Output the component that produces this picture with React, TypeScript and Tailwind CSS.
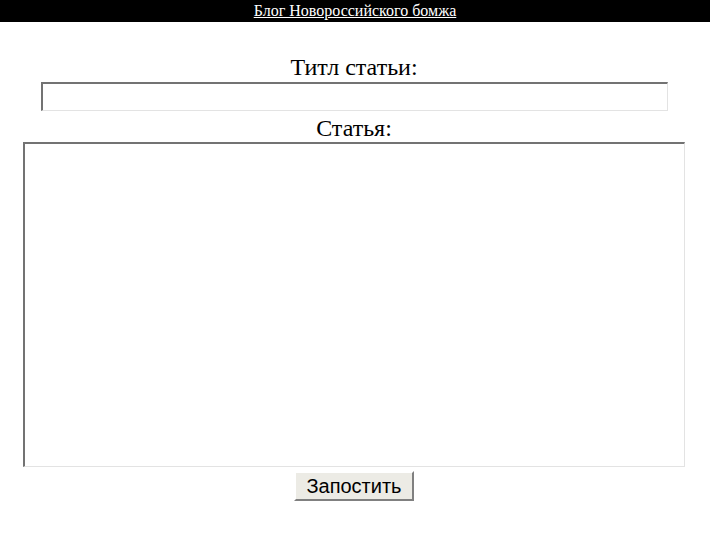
import React from 'react';

const serif = "font-['Liberation_Serif',serif]";

export default function App() {
  return (
    <div className={`min-h-[542px] w-[710px] bg-white ${serif}`}>
      {/* верхняя полоса */}
      <div className="flex h-[22px] items-center justify-center bg-black">
        <a href="#" className="text-[16px] leading-none text-white underline">
          Блог Новороссийского бомжа
        </a>
      </div>

      <div className="flex flex-col items-center pr-[2px] pt-[30px]">
        <label className="text-[24px] leading-[30px] text-black">Титл статьи:</label>
        <input
          type="text"
          className="h-[29px] w-[627px] border-t-2 border-l-2 border-r border-b border-t-[#737373] border-l-[#737373] border-r-[#e3e3e3] border-b-[#e3e3e3] bg-white outline-none"
        />
        <label className="mt-[3px] text-[24px] leading-[28px] text-black">Статья:</label>
        <textarea className="h-[325px] w-[662px] resize-none border-t-2 border-l-2 border-r border-b border-t-[#737373] border-l-[#737373] border-r-[#e3e3e3] border-b-[#e3e3e3] bg-white outline-none" />
        <button className="mt-[4px] h-[30px] w-[120px] border-t-2 border-l-2 border-r-2 border-b-2 border-t-white border-l-white border-r-[#808080] border-b-[#808080] bg-[#ecebe5] font-['Liberation_Sans',sans-serif] text-[20px] leading-none text-black">
          Запостить
        </button>
      </div>
    </div>
  );
}
